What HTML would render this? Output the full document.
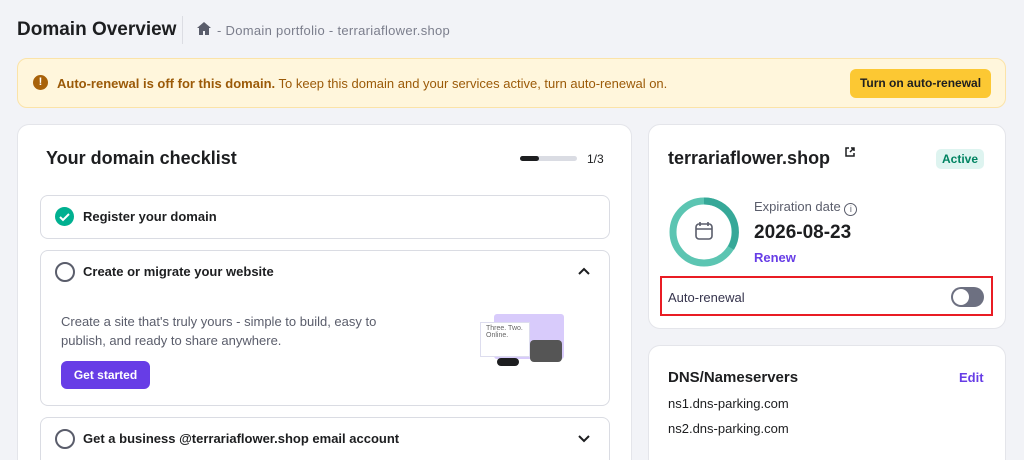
<!DOCTYPE html><html style="width:1024px;height:460px;overflow:hidden"><head><style>
body{margin:0;width:1024px;height:460px;overflow:hidden;background:#f2f3f7;font-family:"Liberation Sans",sans-serif;color:#2f1c6a;position:relative}
.a{position:absolute}
.card{position:absolute;background:#fff;border:1px solid #e4e5ea;border-radius:12px 12px 0 0;border-bottom:none;box-sizing:border-box}
.item{position:absolute;left:40px;width:570px;border:1px solid #dadce3;border-radius:8px;background:#fff;box-sizing:border-box}
.t{color:#1d1e20}
</style></head><body>
<div class="a t" style="left:17px;top:19px;font-size:19px;font-weight:bold">Domain Overview</div>
<div class="a" style="left:182px;top:16px;width:1px;height:28px;background:#dcdde3"></div>
<svg class="a" style="left:197px;top:22px" width="14" height="13" viewBox="0 0 14 13"><path d="M7 0L0 6h2v7h4V9h2v4h4V6h2z" fill="#5a5d6b"/></svg>
<div class="a" style="left:217px;top:23px;font-size:13px;color:#7b7e8c;letter-spacing:0.3px">- Domain portfolio - terrariaflower.shop</div>
<div class="a" style="left:17px;top:58px;width:989px;height:50px;background:#fff6dc;border:1px solid #fbe3a8;border-radius:10px;box-sizing:border-box"></div>
<div class="a" style="left:33px;top:75px;width:15px;height:15px;border-radius:50%;background:#a8620a;color:#fff;font-size:11px;font-weight:bold;text-align:center;line-height:15px">!</div>
<div class="a" style="left:57px;top:76px;font-size:13px;color:#9b5a08"><b>Auto-renewal is off for this domain.</b> To keep this domain and your services active, turn auto-renewal on.</div>
<div class="a" style="left:850px;top:69px;width:141px;height:29px;background:#fcc833;border-radius:6px;font-size:12px;font-weight:bold;color:#1d1e20;text-align:center;line-height:29px">Turn on auto-renewal</div>

<div class="card" style="left:17px;top:124px;width:615px;height:336px"></div>
<div class="a t" style="left:46px;top:148px;font-size:18px;font-weight:bold">Your domain checklist</div>
<div class="a" style="left:520px;top:156px;width:57px;height:5px;border-radius:3px;background:#dadce3"><div style="width:19px;height:5px;border-radius:3px;background:#1d1e20"></div></div>
<div class="a t" style="left:587px;top:152px;font-size:12px">1/3</div>
<div class="item" style="top:195px;height:44px"></div>
<div class="a" style="left:55px;top:207px;width:19px;height:19px;border-radius:50%;background:#00b090"><svg width="19" height="19"><path d="M5 10l3 3 6-6" stroke="#fff" stroke-width="2" fill="none"/></svg></div>
<div class="a t" style="left:83px;top:209px;font-size:13px;font-weight:bold">Register your domain</div>
<div class="item" style="top:250px;height:156px"></div>
<div class="a" style="left:55px;top:262px;width:16px;height:16px;border-radius:50%;border:2px solid #5a5d6b"></div>
<div class="a t" style="left:83px;top:264px;font-size:13px;font-weight:bold">Create or migrate your website</div>
<svg class="a" style="left:578px;top:267px" width="12" height="8"><path d="M1 7l5-5 5 5" stroke="#1d1e20" stroke-width="2" fill="none"/></svg>
<div class="a" style="left:61px;top:312px;font-size:13px;line-height:19px;color:#5a5d6b;width:340px">Create a site that's truly yours - simple to build, easy to publish, and ready to share anywhere.</div>
<div class="a" style="left:61px;top:361px;width:89px;height:28px;background:#673de6;border-radius:6px;color:#fff;font-size:12px;font-weight:bold;text-align:center;line-height:28px">Get started</div>
<div class="a" style="left:494px;top:314px;width:70px;height:45px;background:#d8cbfb;border-radius:3px"></div>
<div class="a" style="left:480px;top:322px;width:50px;height:35px;background:#fff;border:1px solid #dde;font-size:7px;color:#666;padding:2px 5px;box-sizing:border-box">Three. Two.<br>Online.</div>
<div class="a" style="left:530px;top:340px;width:32px;height:22px;background:#555;border-radius:4px"></div>
<div class="a" style="left:497px;top:358px;width:22px;height:8px;background:#1d1e20;border-radius:4px"></div>
<div class="item" style="top:417px;height:43px;border-bottom:none;border-radius:8px 8px 0 0"></div>
<div class="a" style="left:55px;top:429px;width:16px;height:16px;border-radius:50%;border:2px solid #5a5d6b"></div>
<div class="a t" style="left:83px;top:431px;font-size:13px;font-weight:bold">Get a business @terrariaflower.shop email account</div>
<svg class="a" style="left:578px;top:435px" width="12" height="8"><path d="M1 1l5 5 5-5" stroke="#1d1e20" stroke-width="2" fill="none"/></svg>

<div class="card" style="left:648px;top:124px;width:358px;height:205px;border-radius:12px;border-bottom:1px solid #e4e5ea"></div>
<div class="a t" style="left:668px;top:148px;font-size:18px;font-weight:bold">terrariaflower.shop</div>
<svg class="a" style="left:845px;top:147px" width="10" height="10"><path d="M4 1H1v8h8V6M5 5l4-4M6 1h3v3" stroke="#1d1e20" stroke-width="1.5" fill="none"/></svg>
<div class="a" style="left:936px;top:149px;width:48px;height:20px;background:#def4f0;border-radius:5px;color:#008361;font-size:12px;font-weight:bold;text-align:center;line-height:20px">Active</div>
<svg class="a" style="left:668px;top:196px" width="72" height="72"><circle cx="36" cy="36" r="31" stroke="#5cc5b2" stroke-width="7" fill="none"/><path d="M36 5A31 31 0 0 1 63 52" stroke="#36a898" stroke-width="7" fill="none"/><rect x="28" y="28" width="16" height="15" rx="3" stroke="#5a5d6b" stroke-width="1.6" fill="none"/><path d="M28 33h16M32 26v4M40 26v4" stroke="#5a5d6b" stroke-width="1.6"/></svg>
<div class="a" style="left:754px;top:199px;font-size:13px;color:#5a5d6b">Expiration date <span style="display:inline-block;width:11px;height:11px;border:1.3px solid #5a5d6b;border-radius:50%;font-size:9px;text-align:center;line-height:11px;vertical-align:-1px">i</span></div>
<div class="a t" style="left:754px;top:222px;font-size:19px;font-weight:bold">2026-08-23</div>
<div class="a" style="left:754px;top:250px;font-size:13px;font-weight:bold;color:#673de6">Renew</div>
<div class="a" style="left:660px;top:276px;width:333px;height:40px;border:2px solid #e91c24;box-sizing:border-box"></div>
<div class="a" style="left:668px;top:290px;font-size:13px;color:#36344d">Auto-renewal</div>
<div class="a" style="left:951px;top:287px;width:33px;height:20px;border-radius:10px;background:#6d7081"><div style="position:absolute;left:2px;top:2px;width:16px;height:16px;border-radius:50%;background:#fff"></div></div>

<div class="card" style="left:648px;top:345px;width:358px;height:115px"></div>
<div class="a t" style="left:668px;top:369px;font-size:15px;font-weight:bold">DNS/Nameservers</div>
<div class="a" style="left:959px;top:370px;font-size:13px;font-weight:bold;color:#673de6">Edit</div>
<div class="a t" style="left:668px;top:396px;font-size:13px">ns1.dns-parking.com</div>
<div class="a t" style="left:668px;top:421px;font-size:13px">ns2.dns-parking.com</div>
</body></html>
